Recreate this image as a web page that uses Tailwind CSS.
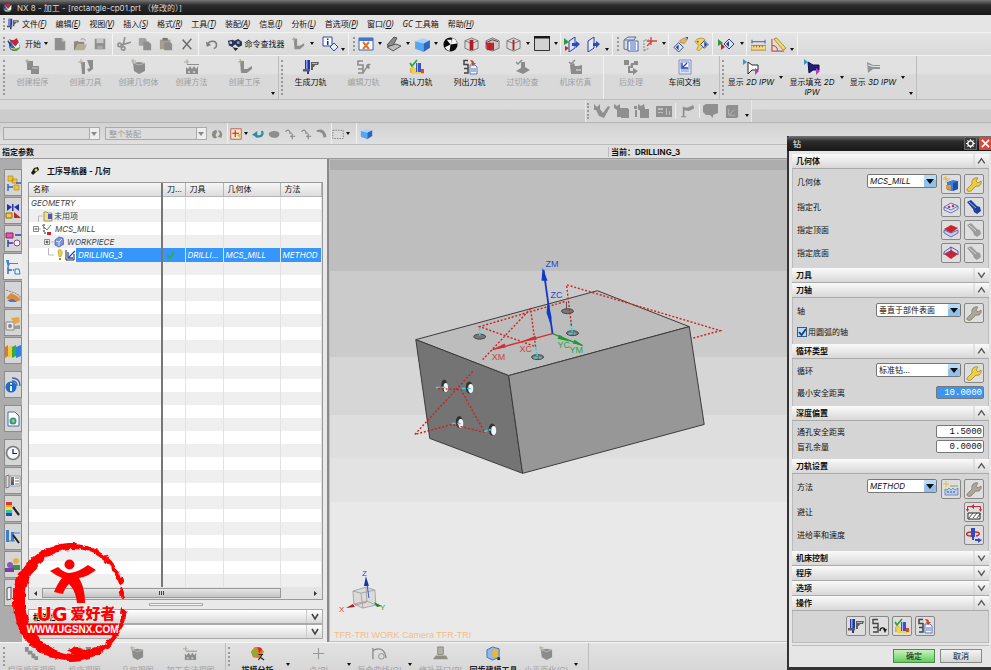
<!DOCTYPE html>
<html lang="zh-CN">
<head>
<meta charset="utf-8">
<title>NX 8 - 加工</title>
<script src="https://cdn.jsdelivr.net/npm/@tailwindcss/browser@4"></script>
</head>
<body class="h-screen overflow-hidden bg-[#d8d8d8] font-['Inter','Noto_Sans_CJK_SC',sans-serif] text-[8px] leading-[10px] text-[#111]">

<!-- Icon library -->
<svg class="hidden" aria-hidden="true">
  <symbol id="ar" viewBox="0 0 8 4"><path d="M2 0h4L4 3z" fill="#111"/></symbol>
  <symbol id="arg" viewBox="0 0 8 4"><path d="M1 0h6L4 4z" fill="#8a8a8a"/></symbol>
  <symbol id="nx" viewBox="0 0 16 16"><circle cx="8" cy="9" r="6" fill="#2d6fc4"/><path d="M3 11c3 5 10 4 11-2-2 3-7 4-11 2z" fill="#e9c63a"/><path d="M4 13c4 3 9 1 10-3-2 2-6 4-10 3z" fill="#37a34a"/><path d="M2 2l5 2 3-3 2 3-2 5-4-1z" fill="#c9262c"/><path d="M4 5l5 5 5-6-1 7-4 1z" fill="#eef4fb"/><path d="M1 4l3 5" stroke="#0d3a7d" stroke-width="1.5"/></symbol>
  <symbol id="gen" viewBox="0 0 16 16"><path d="M2 1h5v9H6v5H4v-5H2z" fill="#2336a8"/><path d="M3 1h1.500v9H3z" fill="#8ea1f2"/><path d="M0 10h7v2.500H0z" fill="#5c5c66"/><path d="M8 3h8l-1 3h-3l-1 2h-1v3H8z" fill="#5f5f5f"/><path d="M9 4h5v1H9z" fill="#b5b5b5"/></symbol>
  <symbol id="new" viewBox="0 0 16 16"><path d="M2 1h8l4 4v10H2z" fill="currentColor"/><path d="M10 1v4h4" fill="#c4c4c4"/></symbol>
  <symbol id="open" viewBox="0 0 16 16"><path d="M1 5l4-1 1 1h6v3H5l-3 6H1z" fill="#8e8b7c"/><path d="M5 8h10l-3 6H2z" fill="#b2ad94"/><path d="M8 3c2-2 5-1 5 1" fill="none" stroke="#8a8a8a"/></symbol>
  <symbol id="save" viewBox="0 0 16 16"><path d="M2 2h12v12H2z" fill="currentColor"/><path d="M4 2h8v5H4z" fill="#c6c6c6"/><path d="M5 10h6v4H5z" fill="#aaa"/></symbol>
  <symbol id="cut" viewBox="0 0 16 16"><g fill="none" stroke="currentColor" stroke-width="1.8"><path d="M9 0L7 10M16 6L5 9"/><circle cx="3" cy="9" r="2"/><circle cx="7" cy="13" r="2"/></g></symbol>
  <symbol id="copy" viewBox="0 0 16 16"><path d="M1 1h7l2 2v7H1z" fill="#a2a2a2"/><path d="M6 5h6l3 3v7H6z" fill="currentColor"/></symbol>
  <symbol id="paste" viewBox="0 0 16 16"><path d="M1 3h12v11H1z" fill="#a39f8c"/><path d="M4 1h6v3H4z" fill="#777"/><path d="M6 6h7l2 2v7H6z" fill="#8d8d8d"/></symbol>
  <symbol id="del" viewBox="0 0 16 16"><path d="M3 3l10 11M13 2L3 14" stroke="#6f6f6f" stroke-width="1.7"/></symbol>
  <symbol id="undo" viewBox="0 0 16 16"><path d="M3 8c3-5 11-4 10 2 0 2-2 3-3 3" fill="none" stroke="#7c7c7c" stroke-width="1.8"/><path d="M1 5l1 6 5-2z" fill="#7c7c7c"/></symbol>
  <symbol id="binoc" viewBox="0 0 16 16"><path d="M1 4l5-1 2 1 4-2 4 3v4l-4 2-3-3-2 1-1 2-4-2z" fill="#2a3556"/><circle cx="4" cy="6" r="1.500" fill="#b9c6e6"/><circle cx="12" cy="6" r="1.500" fill="#8fa2d2"/><path d="M6 11l3 4 3-3z" fill="#222"/></symbol>
  <symbol id="step" viewBox="0 0 16 16"><path d="M3 2h4v8h3l5-3v3l-5 4H4z" fill="currentColor"/><path d="M1 3l5-1M3 0l1 5" stroke="#a9a38c"/></symbol>
  <symbol id="info" viewBox="0 0 16 16"><path d="M1 1h9v9H1z" fill="#fff" stroke="#3346a6"/><path d="M5 2.500h1.500v1.500H5zM5 5h1.500v4H5z" fill="#16309a"/><path d="M12 7l4 4-4 4-4-4z" fill="#e8edf8" stroke="#3a4d87"/></symbol>
  <symbol id="win" viewBox="0 0 16 16"><path d="M1 2h14v12H1z" fill="#fff" stroke="#3463b4"/><path d="M1 2h14v3H1z" fill="#3f74cf"/><path d="M5 6l6 7M11 6l-6 7" stroke="#e0762b" stroke-width="2"/></symbol>
  <symbol id="wire" viewBox="0 0 16 16"><path d="M1 9l7-8 3 1-5 9z" fill="#8b8b8b" stroke="#555"/><path d="M1 11l9-3 5 2-8 5z" fill="#bdbdbd" stroke="#555"/></symbol>
  <symbol id="cube" viewBox="0 0 16 16"><path d="M1 5l7-3 7 2-6 3z" fill="#a8d3fa"/><path d="M1 5l8 2v8l-8-3z" fill="#5aa5f0"/><path d="M9 7l6-3v7l-6 4z" fill="#2a68bd"/></symbol>
  <symbol id="ball" viewBox="0 0 16 16"><circle cx="8" cy="8" r="7.500" fill="#0b0b0b"/><path d="M8 8L10 1a7 7 0 0 1 5 6zM8 8l-1 7a7 7 0 0 1-5-4zM4 3l4 5 2-5z" fill="#f5f5f5"/></symbol>
  <symbol id="rc1" viewBox="0 0 16 16"><path d="M1 4l7-3 7 3v8l-7 3-7-3z" fill="#d9d9d9" stroke="#777"/><path d="M1 4l7 3 7-3" fill="none" stroke="#777"/><path d="M6 3h4v11H6z" fill="#b81820"/></symbol>
  <symbol id="rc2" viewBox="0 0 16 16"><path d="M1 4l7-3 7 3v8l-7 3-7-3z" fill="#cfc6c6" stroke="#777"/><path d="M1 6h8v8H2z" fill="#c4252b"/><path d="M1 6l7-3 6 2M9 6v8M5 6v8" fill="none" stroke="#6e3434"/></symbol>
  <symbol id="rc3" viewBox="0 0 16 16"><path d="M1 4l7-3 7 3v8l-7 3-7-3z" fill="#dcdcdc" stroke="#777"/><path d="M1 4l7 3 7-3" fill="none" stroke="#777"/><path d="M7 3h2v11H7z" fill="#b02329"/></symbol>
  <symbol id="rect" viewBox="0 0 16 16"><path d="M.5 1.500h15v13H.5z" fill="#d2d2d2" stroke="#333"/><path d="M0 0h16v2.500H0z" fill="#181818"/></symbol>
  <symbol id="clip1" viewBox="0 0 16 16"><path d="M5 5l6-4v11l-6 4z" fill="#d6e2f7" stroke="#2c3f9c"/><path d="M0 2l5 4-5 3z" fill="#2f9a3c"/><path d="M1 10l4 2-4 3z" fill="#c9262c"/><path d="M8 7h4V5l4 3-4 4v-2H8z" fill="#2d49ba"/></symbol>
  <symbol id="clip2" viewBox="0 0 16 16"><path d="M3 5l6-4v11l-6 4z" fill="#e4ecfa" stroke="#2c3f9c"/><path d="M8 7h3V5l4 3-4 4v-2H8z" fill="#2d49ba"/></symbol>
  <symbol id="layers" viewBox="0 0 16 16"><path d="M1 4l4-3h8l-2 3zM1 4v9l4 1V5" fill="#d7dbe6" stroke="#66718f"/><path d="M5 5h10v10H5z" fill="#fff" stroke="#3f65b8"/><path d="M7 7h6M7 9h6M7 11h6M7 13h6" stroke="#3f65b8"/></symbol>
  <symbol id="csys" viewBox="0 0 16 16"><path d="M2 15V4h5M2 15l5-3" fill="none" stroke="#888" stroke-dasharray="2 1"/><path d="M9 1v8M5 5h10M10 5l-5 5" stroke="#d0463b" stroke-width="1.300"/></symbol>
  <symbol id="hand" viewBox="0 0 16 16"><path d="M6 6l5 5-5 5-5-5z" fill="#dfe7f7" stroke="#27408c"/><path d="M6 8v6l-3-3z" fill="#27408c"/><path d="M7 4l5-3 3 2-3 4-4-1z" fill="#e5b55a" stroke="#96703a" stroke-width=".6"/><path d="M13 0h3v3z" fill="#3a4fae"/></symbol>
  <symbol id="paint" viewBox="0 0 16 16"><path d="M1 5c2-4 8-5 11-2l-4 4 2 3-5 5-2-2 2-4z" fill="#f1d555" stroke="#8d7a28" stroke-width=".7"/><path d="M11 4l4 4-4 4-4-4z" fill="#dfe7f7" stroke="#27408c"/><path d="M11 5v6l3-3z" fill="#27408c"/><circle cx="4" cy="5" r="1" fill="#d33"/></symbol>
  <symbol id="rg" viewBox="0 0 16 16"><path d="M0 3l5 4-5 3z" fill="#2f9a3c"/><path d="M3 7l4 4-4 3z" fill="#c9262c"/><path d="M11 3l5 5-5 5-5-5z" fill="#dfe7f7" stroke="#27408c"/><path d="M11 5v6l-3-3z" fill="#27408c"/></symbol>
  <symbol id="ruler" viewBox="0 0 16 16"><path d="M0 9h16v5H0z" fill="#f3d88a" stroke="#b0883a"/><path d="M1 3v4M15 3v4M1 5h14" stroke="#3b56b5"/><path d="M3 9v2M6 9v2M9 9v2M12 9v2" stroke="#8a6a28"/></symbol>
  <symbol id="prot" viewBox="0 0 16 16"><path d="M1 2v13h13M1 9c4 0 6 3 6 6" fill="none" stroke="#c25a50" stroke-width="1.300"/><path d="M3 2l3-1 10 11-3 2z" fill="#f1dc62" stroke="#8d7a28" stroke-width=".8"/></symbol>

  <symbol id="cprog" viewBox="0 0 16 16"><path d="M2 2h6v5h6v8H6v-4H2z" fill="currentColor"/><path d="M7 8h6v2H7z" fill="#aaa"/><path d="M0 2l5 0M2 0v5" stroke="#b0ab94"/></symbol>
  <symbol id="ctool" viewBox="0 0 16 16"><path d="M3 3h4v12H4zM9 1h6v9l-4 3-2-3 3-1z" fill="currentColor"/><path d="M0 3h5M3 0v5" stroke="#b0ab94"/></symbol>
  <symbol id="cgeo" viewBox="0 0 16 16"><path d="M2 4l6-1 6 1v8l-6 3-5-3z" fill="currentColor"/><path d="M2 4l6 2 6-2" stroke="#b5b5b5" fill="none"/><path d="M0 2h5M2 0v5" stroke="#b0ab94"/></symbol>
  <symbol id="cmeth" viewBox="0 0 16 16"><path d="M2 8l2 2 2-3 2 3 2-3 2 3 2-3v8H2z" fill="currentColor"/><path d="M3 5h12v1H3z" fill="currentColor"/><path d="M4 12h2v2H4zM9 12h2v2H9z" fill="#c6c6c6"/><path d="M0 3h5M3 0v5" stroke="#b0ab94"/></symbol>
  <symbol id="edit" viewBox="0 0 16 16"><path d="M7 2H2v4h5v4H2M2 14h5v-4" fill="none" stroke="currentColor" stroke-width="1.600"/><path d="M7 13l3-5c0-3 2-4 5-3l-2 2 1 2c-1 1-2 1-3 0l-3 5z" fill="currentColor"/></symbol>
  <symbol id="verify" viewBox="0 0 16 16"><path d="M1 9l4-1v6H1z" fill="#e8a93f"/><path d="M2 9l10 0 3 2v4H3z" fill="#f0cf52"/><path d="M7 4h5v9H7z" fill="#3c55c4"/><path d="M8 4h1v9H8z" fill="#a9b8f4"/><path d="M12 10h3v4h-3z" fill="#d9482f"/><path d="M1 4l2 3 5-6" fill="none" stroke="#2fa53c" stroke-width="1.800"/></symbol>
  <symbol id="list" viewBox="0 0 16 16"><path d="M6 1.500H2v4h4v4H2M2 14h4v-4" fill="none" stroke="#444" stroke-width="1.500"/><path d="M8 6h5l2 2v7H8z" fill="#f3f7fe" stroke="#5a78bd"/><path d="M9 10h5M9 12h5" stroke="#5a78bd"/><path d="M8 1c3 0 4 1 4 3h2l-3 3-2-3h1z" fill="#c8472f"/></symbol>
  <symbol id="gouge" viewBox="0 0 16 16"><path d="M6 3h4v5l5 3-7 4-7-3 5-3z" fill="currentColor"/><path d="M1 3l2 2 4-4" fill="none" stroke="currentColor" stroke-width="1.500"/></symbol>
  <symbol id="mach" viewBox="0 0 16 16"><path d="M2 6l4-2 1 3h3l4-1v9H3z" fill="currentColor"/><path d="M1 3l2 2 4-4" fill="none" stroke="currentColor" stroke-width="1.500"/><path d="M8 10h5v2H8z" fill="#bbb"/></symbol>
  <symbol id="post" viewBox="0 0 16 16"><path d="M1 1h5v5H1zM8 4h3V2h4v4h-5v3H7zM5 7h2v5h3V9l5 3-5 4v-2H5z" fill="currentColor"/></symbol>
  <symbol id="doc" viewBox="0 0 16 16"><path d="M2 1h12v14H2z" fill="#dfe5f6" stroke="#8592c4"/><path d="M4 3h8v7H4z" fill="#fff" stroke="#7f93cf"/><path d="M5 4v5h6M6 8l4-4" fill="none" stroke="#2947b2" stroke-width="1.400"/><path d="M4 12h8" stroke="#8592c4"/></symbol>
  <symbol id="ipw2" viewBox="0 0 16 16"><path d="M5 3l4 3h6v5H9l-4 4z" fill="#fff" stroke="#222"/><path d="M0 0l4 3-4 3z" fill="#2a9ccc"/><path d="M12 9l4 3-4 4z" fill="#b93bb7"/></symbol>
  <symbol id="ipwf" viewBox="0 0 16 16"><path d="M4 3l5 3h6v5H9l-4 3z" fill="#1d1d84" stroke="#101040"/><path d="M0 0l4 3-4 3z" fill="#2a9ccc"/><path d="M12 9l4 3-4 4z" fill="#b93bb7"/></symbol>
  <symbol id="ipw3" viewBox="0 0 16 16"><path d="M2 3l6 3h7v4H8l-5 4z" fill="#8d9499"/><path d="M3 6l5 1.500h7" stroke="#dfe5e8" fill="none" stroke-width="1.200"/></symbol>

  <symbol id="g1" viewBox="0 0 16 16"><path d="M0 1l3 3 3-3v5l3 4 5-7 2 1-6 11L5 13 2 7H0z" fill="currentColor"/></symbol>
  <symbol id="g2" viewBox="0 0 16 16"><path d="M0 1l3 2 3-2v4h8v9H3V7L0 5zM7 6h8v9H7z" fill="currentColor"/></symbol>
  <symbol id="g3" viewBox="0 0 16 16"><path d="M0 3h3v3H0zM1 7h2v7H1zM4 1l3 2 3-2 1 5h4v9H6V7H4z" fill="currentColor"/></symbol>
  <symbol id="g4" viewBox="0 0 16 16"><path d="M0 3h16v11H0z" fill="currentColor"/><path d="M2 5h5v2H2zM2 9h5v1H2zM10 5h1v7h-1zM13 8h1v4h-1z" fill="#bdbdbd"/></symbol>
  <symbol id="g5" viewBox="0 0 16 16"><path d="M2 3h2v12H2zM4 4h4l6-3 1 4-6 3-5-1zM0 14h6v1H0z" fill="currentColor"/></symbol>
  <symbol id="g6" viewBox="0 0 16 16"><path d="M0 3l3-2h12v9l-5 2v3l-3-3H3l-3-3z" fill="currentColor"/></symbol>
  <symbol id="g7" viewBox="0 0 16 16"><path d="M1 2l2-1h11v13l-2 1H1z" fill="currentColor"/><path d="M4 5v7h7M5 11l5-5" fill="none" stroke="#b5b5b5"/></symbol>
  <symbol id="link" viewBox="0 0 16 16"><path d="M2 5l5-3 1 4-2 3 2 4-4 1-3-4zM9 3l4 1 2 4-1 5-5-1 3-4z" fill="#8b8b85"/></symbol>
  <symbol id="snap" viewBox="0 0 16 16"><path d="M1 1h14v14H1z" fill="#f7e6c8" stroke="#b53a33"/><path d="M7 3v9M3 7h9" stroke="#c02727" stroke-width="1.500"/><path d="M9 9l4 4 1-5z" fill="#e2b92b"/></symbol>
  <symbol id="back" viewBox="0 0 16 16"><path d="M13 4c2 3 1 7-3 7H5" fill="none" stroke="#2b8d9d" stroke-width="3"/><path d="M0 9l7-5v9z" fill="#2b8d9d"/></symbol>
  <symbol id="blob" viewBox="0 0 16 16"><path d="M1 8c0-4 12-6 14-1 1 4-3 7-7 6-3 0-7-2-7-5z" fill="#8e8e8e"/></symbol>
  <symbol id="pt" viewBox="0 0 16 16"><path d="M2 5c3-4 6-2 6 2M7 7h4M8 11h7M11 8v7" fill="none" stroke="#888" stroke-width="1.600"/></symbol>
  <symbol id="pt2" viewBox="0 0 16 16"><path d="M1 3c6-3 12 0 13 9l-4 1c0-6-4-8-9-8z" fill="#8c8c8c"/></symbol>
  <symbol id="dash" viewBox="0 0 16 16"><path d="M1 3h14v11H1z" fill="none" stroke="#666" stroke-dasharray="2 1.500"/></symbol>

  <symbol id="s1" viewBox="0 0 16 16"><path d="M3 1h5v5H3zM7 4h5v4H7zM9 10h5v5H9z" fill="#f0c531" stroke="#a8801c" stroke-width=".6"/><path d="M3 9v7M3 12h5M11 8h5" stroke="#2b62c0" stroke-width="1.400"/></symbol>
  <symbol id="s2" viewBox="0 0 16 16"><path d="M2 1l5 3-5 4zM14 1L9 4l5 4z" fill="#2230b0"/><path d="M7 1h1.500v7H7z" fill="#2230b0"/><path d="M1 10h6v5H1z" fill="#f2cc3a" stroke="#8a6a12"/><path d="M9 9l7 6H9z" fill="#c2252a"/></symbol>
  <symbol id="s3" viewBox="0 0 16 16"><path d="M1 2h7v5H1z" fill="#d85cab" stroke="#8d2068"/><path d="M3 9v7M3 12h5M10 4h6" stroke="#2b3fa0" stroke-width="1.400"/><circle cx="12" cy="12" r="3" fill="#fff" stroke="#a13582"/></symbol>
  <symbol id="s4" viewBox="0 0 16 16"><path d="M1 1h3v3h9v1H5l-2 4z" fill="#3f86d4"/><path d="M3 8v7M3 11h4M8 11h1" stroke="#2b62c0" stroke-width="1.400"/><path d="M10 10l4 0 1 5h-5z" fill="#eaf3fd" stroke="#2f78c5"/></symbol>
  <symbol id="s5" viewBox="0 0 16 16"><path d="M1 3l9 3 5 3v3" fill="none" stroke="#8a78b8" stroke-dasharray="2 1"/><path d="M1 11l5-5 6 3 4 4-6 2z" fill="#e08a35"/><path d="M2 13l6-1 4 3H5z" fill="#3f79cb"/></symbol>
  <symbol id="s6" viewBox="0 0 16 16"><path d="M1 7h8v8H1z" fill="#e7e7e7" stroke="#888"/><path d="M6 3l8-1 1 5-5 2z" fill="#eba643"/><path d="M9 11l6-1v4H9z" fill="#9a9a9a"/><circle cx="5" cy="11" r="2" fill="#888"/></symbol>
  <symbol id="s7" viewBox="0 0 16 16"><path d="M0 4l3-2v11l-3 2z" fill="#e2762c"/><path d="M3 4l4-2v11l-4 2z" fill="#f0cd2e"/><path d="M7 4l4-2v11l-4 2z" fill="#35a94a"/><path d="M11 4l5-2v11l-5 2z" fill="#2c83dc"/></symbol>
  <symbol id="s8" viewBox="0 0 16 16"><circle cx="6" cy="10" r="5.500" fill="#1c6cc9"/><path d="M5 6h2v1.500H5zM5 9h2v5H5z" fill="#fff"/><path d="M7 4c3 0 5 2 5 5M7 1c5 0 8 3 8 8" fill="none" stroke="#3f5db5" stroke-width="1.300"/></symbol>
  <symbol id="s9" viewBox="0 0 16 16"><path d="M3 1h7l4 4v10H3z" fill="#fff" stroke="#3c6fb8"/><circle cx="8" cy="10" r="3.500" fill="#3b8f83"/><path d="M6 9l3-1 1 3-2 1z" fill="#8fd06a"/></symbol>
  <symbol id="s10" viewBox="0 0 16 16"><circle cx="8" cy="8" r="6.500" fill="#f3f6fa" stroke="#7a7a7a" stroke-width="1.600"/><path d="M8 4v4.500h4" fill="none" stroke="#222" stroke-width="1.200"/></symbol>
  <symbol id="s11" viewBox="0 0 16 16"><path d="M1 3l3-1v12l-3 1z" fill="#ddd" stroke="#777"/><path d="M5 3h10v10H5z" fill="#fff" stroke="#999"/><path d="M6 4h3v3H6z" fill="#38a05d"/><path d="M6 7h3v2H6z" fill="#d2432d"/><path d="M6 9h3v3H6z" fill="#2b62c0"/><path d="M10 5h4M10 8h4M10 11h4" stroke="#777"/></symbol>
  <symbol id="s12" viewBox="0 0 16 16"><path d="M1 1h6v3H1z" fill="#e53323"/><path d="M1 4h6v2H1z" fill="#f0a42a"/><path d="M1 6h6v3H1z" fill="#f0e82c"/><path d="M1 9h6v3H1z" fill="#35c3a0"/><path d="M1 12h6v3H1z" fill="#2645d2"/><path d="M8 6l6 8" stroke="#222" stroke-width="2.200"/></symbol>
  <symbol id="s13" viewBox="0 0 16 16"><path d="M1 1h3v12H1zM6 3h3v9H6z" fill="#3a80cc"/><path d="M1 12h9M9 4h6" stroke="#3a80cc"/><path d="M8 6l6 8" stroke="#222" stroke-width="2"/></symbol>
  <symbol id="s14" viewBox="0 0 16 16"><circle cx="11" cy="4" r="3" fill="#e3b24a"/><path d="M6 8h9v5H6z" fill="#3d9146"/><circle cx="5" cy="8" r="3" fill="#8b5ab8"/><path d="M0 11h9v4H0z" fill="#7242a5"/></symbol>
  <symbol id="s15" viewBox="0 0 16 16"><path d="M2 3l4-1v12l-4 1z" fill="#eee" stroke="#555"/><path d="M8 3h6v11H8z" fill="#c33"/></symbol>

  <symbol id="geon" viewBox="0 0 16 16"><path d="M4 6l6-2 5 1v8l-6 2-5-1z" fill="#3c7be0"/><path d="M10 7l5-2v8l-5 2z" fill="#1d4fae"/><path d="M3 9h5v5l-5-1z" fill="#da9a3a"/><path d="M0 3h7M3 0v7M1 1l5 5" stroke="#e6b52c"/></symbol>
  <symbol id="wr" viewBox="0 0 16 16"><path d="M1 13l5-5c-1-4 2-7 6-6l-2 3 2 2 3-2c1 4-2 6-5 5l-5 5c-2 1-5 0-4-2z" fill="currentColor" stroke="#7c6a2c" stroke-width=".6"/></symbol>
  <symbol id="hole" viewBox="0 0 16 16"><path d="M1 8l7-4 7 3v3l-7 4-7-3z" fill="#dfe1f4" stroke="#4a58b6" stroke-width=".8"/><path d="M1 8l7 3 7-4" fill="none" stroke="#4a58b6" stroke-width=".8"/><circle cx="6" cy="8" r="1.300" fill="#c8353a"/><circle cx="10" cy="7" r="1.300" fill="#c8353a"/></symbol>
  <symbol id="torch" viewBox="0 0 16 16"><path d="M1 3l4-2 6 6 3 1 1 4-4 3-3-2-1-3z" fill="currentColor"/><path d="M3 3l7 6" stroke="#ffffff" stroke-opacity=".6"/></symbol>
  <symbol id="topf" viewBox="0 0 16 16"><path d="M1 8l7 3 7-3v3l-7 4-7-4z" fill="#c5cbe9" stroke="#4a58b6" stroke-width=".8"/><path d="M1 7l7-4 7 3-7 5z" fill="#cb2530"/></symbol>
  <symbol id="botf" viewBox="0 0 16 16"><path d="M1 9l7-4 7 4-7 5z" fill="#cb2530"/><path d="M1 7l7-5 7 4v4M1 7v3M8 2v8" fill="none" stroke="#3d4ab0" stroke-width=".9"/></symbol>
  <symbol id="metn" viewBox="0 0 16 16"><path d="M2 8l2 1 2-2 2 2 2-2 2 2 3-2v7H2z" fill="#b8d0ee" stroke="#5577aa" stroke-width=".7"/><path d="M4 11h8" stroke="#35568c" stroke-dasharray="2 1"/><path d="M0 3h6M3 0v6" stroke="#e6c52c"/><path d="M7 5h8" stroke="#7ba36c"/></symbol>
  <symbol id="avoid" viewBox="0 0 16 16"><path d="M2 9h12v6H2z" fill="#fff" stroke="#222"/><path d="M3 14l4-5M7 14l4-5M11 14l3-4" stroke="#222" stroke-width=".8"/><path d="M1.500 6V2.500h13V6" fill="none" stroke="#cb2530"/><path d="M8 0v5L5 2.500zM0 5h3L1.500 8zM13 5h3l-1.500 3z" fill="#cb2530"/></symbol>
  <symbol id="feed" viewBox="0 0 16 16"><path d="M5 1h4v9H8v3H6v-3H5z" fill="#3447c4"/><path d="M6 5c-7 0-7 4-1 4M9 5c6 0 5 3 1 4" fill="none" stroke="#cb2530" stroke-width="1.400"/><path d="M9 12h3v-1l4 2-4 3v-2H9z" fill="#3447c4"/></symbol>
  <symbol id="replay" viewBox="0 0 16 16"><path d="M7 1.500H2v4h5v4H2M2 14h5V9" fill="none" stroke="#444" stroke-width="1.400"/><path d="M9 13c0-4 5-4 5-1" fill="none" stroke="#222" stroke-width="1.400"/><path d="M12 11h4l-2 4z" fill="#222"/></symbol>
  <symbol id="v1" viewBox="0 0 16 16"><path d="M1 1h4v4h4v3h3v5H8V9H4V6H1zM11 11h4v4h-4z" fill="currentColor"/></symbol>
  <symbol id="draft" viewBox="0 0 16 16"><path d="M1 6l4-5 6 0 4 5-5 7-7-1z" fill="#df7f2b"/><path d="M1 7l4-4 3 3-2 6z" fill="#7fb62f"/><path d="M8 1l5 2-3 5z" fill="#d22b24"/><path d="M9 9h5M9 15l4-6M11 12l4 3" stroke="#222" stroke-width="1.200"/></symbol>
  <symbol id="curve" viewBox="0 0 16 16"><path d="M1 2v12M1 5c6-4 13-2 14 8" fill="none" stroke="#8a8a8a" stroke-width="1.400"/><circle cx="10" cy="11" r="3" fill="none" stroke="#8a8a8a"/></symbol>
  <symbol id="patch" viewBox="0 0 16 16"><path d="M5 1h6v8H5z" fill="#b2b0a6" stroke="#8b8a80"/><path d="M3 10h11l2 4H0z" fill="#8f8e84"/></symbol>
  <symbol id="sync" viewBox="0 0 16 16"><path d="M1 4l6-3 7 2v9l-7 3-6-3z" fill="#8fb7e8" stroke="#4473b4"/><path d="M7 3l6 1v8H7z" fill="#f3b52e"/><path d="M12 12h3v3h-3z" fill="#333"/></symbol>
</svg>

<div class="flex h-full flex-col">
  <!-- Title bar -->
  <header class="flex h-[15px] shrink-0 items-center gap-1 bg-linear-to-b from-[#777] via-[#2c2c2c] via-35% to-[#181818] pl-[2px] text-[#d8d8d8]">
    <svg class="size-[11px]"><use href="#nx"/></svg>
    <h1>NX 8 - 加工 - [rectangle-cp01.prt （修改的）]</h1>
  </header>

  <!-- Menu bar -->
  <nav class="flex h-[17px] shrink-0 items-center gap-[9px] bg-[#e5e5e5] pl-[3px] font-['Noto_Sans','Noto_Sans_CJK_SC',sans-serif] whitespace-nowrap">
    <span class="-mr-[6px] flex items-center gap-[2px]"><i class="h-3 border-l-2 border-dotted border-[#999]"></i><svg class="size-3"><use href="#gen"/></svg></span>
    <a href="#">文件<i>(<u>F</u>)</i></a><a href="#">编辑<i>(<u>E</u>)</i></a><a href="#">视图<i>(<u>V</u>)</i></a><a href="#">插入<i>(<u>S</u>)</i></a><a href="#">格式<i>(<u>R</u>)</i></a><a href="#">工具<i>(<u>T</u>)</i></a><a href="#">装配<i>(<u>A</u>)</i></a><a href="#">信息<i>(<u>I</u>)</i></a><a href="#">分析<i>(<u>L</u>)</i></a><a href="#">首选项<i>(<u>P</u>)</i></a><a href="#">窗口<i>(<u>O</u>)</i></a><a href="#"><i>GC</i> 工具箱</a><a href="#">帮助<i>(<u>H</u>)</i></a>
  </nav>

  <!-- Standard toolbar -->
  <div class="flex h-[23px] shrink-0 items-stretch border-t border-[#f2f2f2] bg-linear-to-b from-[#e4e4e4] to-[#d9d9d9] pl-[3px] text-[#8f8f8f] whitespace-nowrap [&_button]:flex [&_button]:items-center [&_button]:justify-center [&>div]:flex [&>div]:border-r [&>div]:border-[#f4f4f4]">
    <div class="w-[110px]">
      <i class="my-1 w-1 border-l-2 border-dotted border-[#999]"></i>
      <button class="w-[43px] gap-[3px] text-[#111]"><svg class="size-[15px]"><use href="#nx"/></svg>开始<svg class="-ml-[2px] h-1 w-2"><use href="#ar"/></svg></button>
      <button class="w-5" aria-label="新建"><svg class="size-[14px]"><use href="#new"/></svg></button>
      <button class="w-5" aria-label="打开"><svg class="size-[15px]"><use href="#open"/></svg></button>
      <button class="w-5" aria-label="保存"><svg class="size-[14px]"><use href="#save"/></svg></button>
    </div>
    <div class="w-[86px]">
      <button class="w-[21px]" aria-label="剪切"><svg class="size-[14px]"><use href="#cut"/></svg></button>
      <button class="w-[21px]" aria-label="复制"><svg class="size-[14px]"><use href="#copy"/></svg></button>
      <button class="w-[21px]" aria-label="粘贴"><svg class="size-[14px]"><use href="#paste"/></svg></button>
      <button class="w-[21px]" aria-label="删除"><svg class="size-[14px]"><use href="#del"/></svg></button>
    </div>
    <div class="w-[150px]">
      <button class="w-[25px]" aria-label="撤消"><svg class="size-[14px]"><use href="#undo"/></svg></button>
      <button class="w-[63px] gap-[3px] text-[#111]"><svg class="size-[15px]"><use href="#binoc"/></svg>命令查找器</button>
      <button class="w-[21px]" aria-label="工序"><svg class="size-[14px]"><use href="#step"/></svg></button>
      <button class="w-2" aria-label="更多"><svg class="h-1 w-2"><use href="#ar"/></svg></button>
      <button class="ml-1 w-[19px]" aria-label="信息"><svg class="size-4"><use href="#info"/></svg></button>
      <button class="w-2 pt-3" aria-label="选项"><svg class="h-1 w-2"><use href="#ar"/></svg></button>
    </div>
    <div class="w-[212px]">
      <i class="my-1 ml-1 w-[3px] border-l-2 border-dotted border-[#999]"></i>
      <button class="w-5" aria-label="适合窗口"><svg class="size-4"><use href="#win"/></svg></button>
      <button class="w-2" aria-label="更多"><svg class="h-1 w-2"><use href="#ar"/></svg></button>
      <button class="w-5" aria-label="透视"><svg class="size-4"><use href="#wire"/></svg></button>
      <button class="w-2" aria-label="更多"><svg class="h-1 w-2"><use href="#ar"/></svg></button>
      <button class="w-5" aria-label="着色"><svg class="size-[17px]"><use href="#cube"/></svg></button>
      <button class="w-2" aria-label="更多"><svg class="h-1 w-2"><use href="#ar"/></svg></button>
      <button class="w-[21px]" aria-label="渲染"><svg class="size-[15px]"><use href="#ball"/></svg></button>
      <button class="w-[21px]" aria-label="截面"><svg class="size-[15px]"><use href="#rc1"/></svg></button>
      <button class="w-[21px]" aria-label="编辑截面"><svg class="size-[15px]"><use href="#rc2"/></svg></button>
      <button class="w-[21px]" aria-label="新建截面"><svg class="size-[15px]"><use href="#rc3"/></svg></button>
      <button class="w-2" aria-label="更多"><svg class="h-1 w-2"><use href="#ar"/></svg></button>
      <button class="w-5" aria-label="背景"><svg class="size-4"><use href="#rect"/></svg></button>
      <button class="w-2" aria-label="更多"><svg class="h-1 w-2"><use href="#ar"/></svg></button>
    </div>
    <div class="w-[52px]">
      <button class="w-[21px]" aria-label="剪切截面"><svg class="size-4"><use href="#clip1"/></svg></button>
      <button class="w-[21px]" aria-label="显示截面"><svg class="size-4"><use href="#clip2"/></svg></button>
      <button class="w-2 pt-3" aria-label="选项"><svg class="h-1 w-2"><use href="#ar"/></svg></button>
    </div>
    <div class="w-[56px]">
      <i class="my-1 ml-1 w-1 border-l-2 border-dotted border-[#999]"></i>
      <button class="w-5" aria-label="图层"><svg class="size-4"><use href="#layers"/></svg></button>
      <button class="w-5" aria-label="坐标系"><svg class="size-4"><use href="#csys"/></svg></button>
      <button class="w-2" aria-label="更多"><svg class="h-1 w-2"><use href="#ar"/></svg></button>
    </div>
    <div class="w-[44px] pl-px">
      <button class="w-[21px]" aria-label="隐藏"><svg class="size-[15px]"><use href="#hand"/></svg></button>
      <button class="w-[21px]" aria-label="编辑显示"><svg class="size-[15px]"><use href="#paint"/></svg></button>
    </div>
    <div class="w-[34px]">
      <button class="w-[25px]" aria-label="显示和隐藏"><svg class="size-4"><use href="#rg"/></svg></button>
      <button class="w-2" aria-label="更多"><svg class="h-1 w-2"><use href="#ar"/></svg></button>
    </div>
    <div class="w-[51px]">
      <button class="ml-px w-5" aria-label="测量距离"><svg class="size-[15px]"><use href="#ruler"/></svg></button>
      <button class="w-5" aria-label="测量角度"><svg class="size-[15px]"><use href="#prot"/></svg></button>
      <button class="w-2 pt-3" aria-label="选项"><svg class="h-1 w-2"><use href="#ar"/></svg></button>
    </div>
  </div>

  <!-- Manufacturing toolbar -->
  <div class="flex h-[45px] shrink-0 border-y border-t-[#f2f2f2] border-b-[#bdbdbd] bg-linear-to-b from-[#e1e1e1] from-40% to-[#d9d9d9] to-45% pl-[3px] text-[#a0a0a0] whitespace-nowrap [&_button]:flex [&_button]:shrink-0 [&_button]:flex-col [&_button]:items-center [&_button]:gap-[2px] [&_button]:pt-[3px] [&_svg]:text-[#8c8c8c] [&>div]:flex [&>div]:border-r [&>div]:border-[#bdbdbd]">
    <div class="w-[276px]">
      <i class="my-1 w-[3px] border-l-2 border-dotted border-[#999]"></i>
      <button class="w-[53px]"><svg class="size-4"><use href="#cprog"/></svg>创建程序</button>
      <button class="w-[53px]"><svg class="size-4"><use href="#ctool"/></svg>创建刀具</button>
      <button class="w-[53px]"><svg class="size-4"><use href="#cgeo"/></svg>创建几何体</button>
      <button class="w-[53px]"><svg class="size-4"><use href="#cmeth"/></svg>创建方法</button>
      <button class="w-[53px]"><svg class="size-4"><use href="#step"/></svg>创建工序</button>
      <svg class="mt-9 -ml-[2px] h-1 w-2"><use href="#ar"/></svg>
    </div>
    <div class="w-[441px]">
      <i class="my-1 ml-[2px] w-[3px] border-l-2 border-dotted border-[#999]"></i>
      <button class="w-[53px] text-[#111]"><svg class="size-4"><use href="#gen"/></svg>生成刀轨</button>
      <button class="w-[53px]"><svg class="size-4"><use href="#edit"/></svg>编辑刀轨</button>
      <button class="w-[53px] text-[#111]"><svg class="size-4"><use href="#verify"/></svg>确认刀轨</button>
      <button class="w-[53px] text-[#111]"><svg class="size-4"><use href="#list"/></svg>列出刀轨</button>
      <button class="w-[53px]"><svg class="size-4"><use href="#gouge"/></svg>过切检查</button>
      <button class="w-[53px]"><svg class="size-4"><use href="#mach"/></svg>机床仿真</button>
      <button class="ml-px w-[55px] border-l border-[#f2f2f2]"><svg class="size-4"><use href="#post"/></svg>后处理</button>
      <button class="w-[53px] text-[#111]"><svg class="size-4"><use href="#doc"/></svg>车间文档</button>
      <svg class="mt-9 h-1 w-2"><use href="#ar"/></svg>
    </div>
    <div class="w-[197px] text-[#111]">
      <i class="my-1 ml-[2px] w-[3px] border-l-2 border-dotted border-[#999]"></i>
      <button class="w-[52px]"><svg class="size-4"><use href="#ipw2"/></svg><span>显示 <i>2D IPW</i></span></button>
      <svg class="mt-5 h-1 w-2"><use href="#ar"/></svg>
      <button class="ml-px w-[52px]"><svg class="size-4"><use href="#ipwf"/></svg><span>显示填充 <i>2D</i></span><i class="-mt-[2px]">IPW</i></button>
      <svg class="mt-5 h-1 w-2"><use href="#ar"/></svg>
      <button class="ml-px w-[52px]"><svg class="size-4"><use href="#ipw3"/></svg><span>显示 <i>3D IPW</i></span></button>
      <svg class="mt-5 h-1 w-2"><use href="#ar"/></svg>
      <svg class="mt-9 h-1 w-2"><use href="#ar"/></svg>
    </div>
  </div>

  <!-- Workpiece toolbar -->
  <div class="flex h-[23px] shrink-0 border-b border-[#b4b4b4] bg-linear-to-b from-[#dadada] from-40% to-[#cccccc] to-45%">
    <div class="ml-[585px] flex items-center border-r border-l border-[#e8e8e8] bg-[#d6d6d6] text-[#8f8f8f]">
      <i class="ml-px h-4 w-1 border-l-2 border-dotted border-[#999]"></i>
      <button class="flex w-[21px] justify-center" aria-label="检查"><svg class="size-4"><use href="#g1"/></svg></button>
      <button class="flex w-5 justify-center" aria-label="部件"><svg class="size-4"><use href="#g2"/></svg></button>
      <button class="flex w-5 justify-center" aria-label="树"><svg class="size-4"><use href="#g3"/></svg></button>
      <button class="flex w-6 justify-center border-r border-[#eee]" aria-label="面板"><svg class="size-4"><use href="#g4"/></svg></button>
      <button class="flex w-6 justify-center border-r border-[#eee]" aria-label="标记"><svg class="size-[14px]"><use href="#g5"/></svg></button>
      <button class="flex w-[22px] justify-center" aria-label="注释"><svg class="size-4"><use href="#g6"/></svg></button>
      <button class="flex w-[21px] justify-center" aria-label="文档"><svg class="size-[15px]"><use href="#g7"/></svg></button>
      <svg class="mb-1 h-1 w-2 self-end"><use href="#ar"/></svg>
    </div>
  </div>

  <!-- Selection bar -->
  <div class="flex h-[21px] shrink-0 items-center bg-linear-to-b from-[#d2d2d2] to-[#e0e0e0] pl-[3px] text-[#9a9a9a]">
    <div class="relative h-[13px] w-[97px] border border-[#aaa] bg-[#dcdcdc]">
      <select aria-label="类型过滤器" class="block size-full appearance-none pl-1"><option></option></select>
      <span class="pointer-events-none absolute inset-y-0 right-0 flex w-[10px] items-center border-l border-[#aaa] bg-[#eee]"><svg class="h-1 w-2"><use href="#arg"/></svg></span>
    </div>
    <div class="relative ml-[5px] h-[13px] w-[102px] border border-[#aaa] bg-[#dcdcdc]">
      <select aria-label="选择范围" class="block size-full appearance-none pl-[3px]"><option>整个装配</option></select>
      <span class="pointer-events-none absolute inset-y-0 right-0 flex w-[10px] items-center border-l border-[#aaa] bg-[#eee]"><svg class="h-1 w-2"><use href="#arg"/></svg></span>
    </div>
    <svg class="mr-1 ml-1 size-3"><use href="#link"/></svg>
    <div class="flex h-full items-center gap-1 border-x border-[#f0f0f0] pr-[3px] pl-[2px]">
      <svg class="size-3"><use href="#snap"/></svg><svg class="-ml-1 h-1 w-2"><use href="#ar"/></svg>
      <svg class="-ml-[2px] size-3"><use href="#back"/></svg><svg class="size-3"><use href="#blob"/></svg><svg class="size-3"><use href="#pt"/></svg><svg class="size-3"><use href="#pt"/></svg><svg class="size-3"><use href="#pt2"/></svg>
    </div>
    <svg class="size-3"><use href="#dash"/></svg><svg class="mr-1 h-1 w-2"><use href="#ar"/></svg>
    <div class="flex h-full items-center border-l border-[#f0f0f0] pl-[3px]"><svg class="size-[13px]"><use href="#cube"/></svg></div>
  </div>

  <!-- Cue line -->
  <div class="flex h-[14px] shrink-0 items-center border-t border-[#bbb] bg-[#dfdfdf] font-bold">
    <span class="w-[608px] pl-[2px]">指定参数</span>
    <span class="border-l border-[#bbb] pl-[2px]">当前：DRILLING_3</span>
  </div>

  <!-- Main area -->
  <div class="flex min-h-0 flex-1 border-t border-[#999]">
    <!-- Resource bar -->
    <aside class="flex w-[22px] shrink-0 flex-col items-end gap-[7px] bg-[#acacac] pt-[10px] [&_button]:flex [&_button]:h-[27px] [&_button]:w-[18px] [&_button]:items-center [&_button]:justify-center [&_button]:border [&_button]:border-[#8c8c8c] [&_button]:bg-[#d6d6d6] [&>div]:flex [&>div]:flex-col [&>div]:gap-px">
      <div>
        <button aria-label="装配导航器"><svg class="size-4"><use href="#s1"/></svg></button>
        <button aria-label="约束导航器"><svg class="size-4"><use href="#s2"/></svg></button>
        <button aria-label="部件导航器"><svg class="size-4"><use href="#s3"/></svg></button>
        <button aria-label="工序导航器" class="-ml-px w-[19px]! border-r-0! bg-[#ececec]!"><svg class="size-4"><use href="#s4"/></svg></button>
        <button aria-label="机床导航器"><svg class="size-4"><use href="#s5"/></svg></button>
        <button aria-label="加工特征导航器"><svg class="size-4"><use href="#s6"/></svg></button>
        <button aria-label="重用库"><svg class="size-4"><use href="#s7"/></svg></button>
      </div>
      <div><button aria-label="HD3D 工具"><svg class="size-4"><use href="#s8"/></svg></button></div>
      <div><button aria-label="浏览器"><svg class="size-4"><use href="#s9"/></svg></button></div>
      <div>
        <button aria-label="历史记录"><svg class="size-4"><use href="#s10"/></svg></button>
        <button aria-label="系统材料"><svg class="size-4"><use href="#s11"/></svg></button>
        <button aria-label="可视化"><svg class="size-4"><use href="#s12"/></svg></button>
        <button aria-label="加工向导"><svg class="size-4"><use href="#s13"/></svg></button>
        <button aria-label="角色"><svg class="size-4"><use href="#s14"/></svg></button>
        <button aria-label="系统场景"><svg class="size-4"><use href="#s15"/></svg></button>
      </div>
    </aside>

    <!-- Operation navigator -->
    <section class="flex w-[307px] shrink-0 flex-col border-r-2 border-[#8a8a8a] bg-[#e9e9e9] pr-1 pb-[3px] pl-[6px]">
      <h2 class="flex h-[23px] shrink-0 items-center gap-2 pl-[3px] font-bold"><svg class="size-2" viewBox="0 0 8 8"><path d="M0 6l3-5 4-1 1 3-4 3-2 2z" fill="#1b1b1b"/><circle cx="5" cy="3" r="1.500" fill="#e2dc6a"/></svg>工序导航器 - 几何</h2>
      <div class="flex min-h-0 flex-1 flex-col border border-[#999] bg-white">
        <table class="min-h-0 w-full flex-1 table-fixed border-collapse text-left whitespace-nowrap [&_td]:h-[13px] [&_td]:overflow-hidden [&_td]:border-r [&_td]:border-[#e2e2e2] [&_td]:p-0 [&_td]:pl-[2px] [&_th]:h-[13px] [&_th]:overflow-hidden [&_th]:border-r [&_th]:border-b [&_th]:border-[#b5b5b5] [&_th]:p-0 [&_th]:pl-1 [&_th]:font-normal [&_tr>*:first-child]:border-r-2 [&_tr>*:first-child]:border-r-[#777] [&_tbody_tr:nth-child(even)]:bg-[#efefef]">
          <colgroup><col class="w-[133px]"><col class="w-[23px]"><col class="w-[38px]"><col class="w-[57px]"><col></colgroup>
          <thead class="bg-linear-to-b from-[#f6f6f6] to-[#dcdcdc]"><tr><th>名称</th><th>刀...</th><th>刀具</th><th>几何体</th><th>方法</th></tr></thead>
          <tbody id="rows" class="text-[#444]">
            <tr><td><i>GEOMETRY</i></td><td></td><td></td><td></td><td></td></tr>
            <tr><td><span class="flex items-center gap-px pl-1"><svg class="-my-1 h-[14px] w-[18px]" viewBox="0 0 18 14"><path d="M3.500 14V7H8" fill="none" stroke="#bbb"/><path d="M9 3h3l1 1h4v8H9z" fill="#f3e08a" stroke="#92803a" stroke-width=".8"/><path d="M13 5h4v5h-4z" fill="#4f57b8"/></svg>未用项</span></td><td></td><td></td><td></td><td></td></tr>
            <tr><td><span class="flex items-center gap-[3px] pl-px"><svg class="-my-1 h-[14px] w-5" viewBox="0 0 20 14"><path d="M1.500 4.500h5v5h-5z" fill="#fff" stroke="#888"/><path d="M2.500 7h3" stroke="#333"/><path d="M7 7h2" stroke="#bbb"/><path d="M12 2v9h7" fill="none" stroke="#222" stroke-dasharray="2 1"/><path d="M10 3l5 5 4-5" fill="none" stroke="#3aa149"/><path d="M15 10h4v3h-4z" fill="#c23"/></svg><i>MCS_MILL</i></span></td><td></td><td></td><td></td><td></td></tr>
            <tr><td><span class="flex items-center gap-[3px] pl-[13px]"><svg class="-my-1 h-[14px] w-5" viewBox="0 0 20 14"><path d="M.5 4.500h5v5h-5z" fill="#fff" stroke="#888"/><path d="M1.500 7h3M3 5.500v3" stroke="#333"/><path d="M7 7h3" stroke="#bbb"/><path d="M11 5l4-3 4 1 1 6-5 3-4-2z" fill="#7d93da" stroke="#3f58b5" stroke-width=".7"/><path d="M12 6l3 1 3-3M15 7v4" stroke="#e4eafb" fill="none"/></svg><i>WORKPIECE</i></span></td><td></td><td></td><td></td><td></td></tr>
            <tr class="text-white"><td class="pl-0!"><span class="flex items-center"><svg class="-my-1 h-[14px] w-[47px] shrink-0" viewBox="0 0 47 14"><path d="M19.500 0v7H25" fill="none" stroke="#bbb"/><path d="M29 2.500c2-2 5 0 4 3l-1 3h-2z" fill="#f0d335" stroke="#a18a1c" stroke-width=".6"/><path d="M30 10h2v2h-2z" fill="#a18a1c"/><path d="M37 2v10h8V6" fill="none" stroke="#222"/><path d="M39 4v6h5M40 9l6-6" fill="none" stroke="#2947b2" stroke-width="1.300"/></svg><i class="flex-1 bg-[#3596fb] py-[2px] pl-[2px] leading-[10px]">DRILLING_3</i></span></td><td class="bg-[#3596fb]"><svg class="size-[10px]" viewBox="0 0 10 10"><path d="M2 5l3 3 4-6" fill="none" stroke="#2bb04a" stroke-width="2"/></svg></td><td class="bg-[#3596fb]"><i>DRILLI...</i></td><td class="bg-[#3596fb]"><i>MCS_MILL</i></td><td class="bg-[#3596fb]"><i>METHOD</i></td></tr>
          </tbody>
        </table>
        <div class="flex h-3 shrink-0 items-center gap-1 bg-[#e4e4e4] px-1">
          <svg class="size-[5px]" viewBox="0 0 5 5"><path d="M4 0v5L1 2.500z" fill="#333"/></svg>
          <div class="flex h-[10px] w-[239px] items-center justify-center gap-px border border-[#999] bg-linear-to-b from-[#e6e6e6] to-[#c4c4c4]"><i class="h-1 w-px bg-[#444]"></i><i class="h-1 w-px bg-[#444]"></i><i class="h-1 w-px bg-[#444]"></i></div>
          <svg class="ml-auto size-[5px]" viewBox="0 0 5 5"><path d="M1 0v5l3-2.500z" fill="#333"/></svg>
        </div>
      </div>
      <div class="mx-auto my-[3px] h-[3px] w-[54px] shrink-0 border border-[#aaa] bg-[#f5f5f5]"></div>
      <button class="flex h-[15px] shrink-0 items-center justify-between border border-[#aaa] bg-linear-to-b from-white to-[#d9d9d9] pl-1 font-bold">相依性<span class="flex h-full w-4 items-center justify-center border-l border-[#ccc]"><svg class="size-2" viewBox="0 0 8 8"><path d="M1 1l3 5 3-5" fill="none" stroke="#444" stroke-width="1.600"/></svg></span></button>
      <button aria-label="细节" class="flex h-[15px] shrink-0 items-center justify-end border border-[#aaa] bg-linear-to-b from-white to-[#d9d9d9]"><span class="flex h-full w-4 items-center justify-center border-l border-[#ccc]"><svg class="size-2" viewBox="0 0 8 8"><path d="M1 1l3 5 3-5" fill="none" stroke="#444" stroke-width="1.600"/></svg></span></button>
    </section>

    <!-- Graphics window -->
    <main class="relative min-w-0 flex-1 border border-[#e6b48c] bg-[linear-gradient(#adadad_2%,#bebebe_2%_23%,#cbcbcb_23%_41%,#d6d6d6_41%_53%,#dedede_53%_62%,#e3e3e3_62%_71%,#e9e9e9_71%)]">
      <svg class="size-full" viewBox="330 159 660 482" preserveAspectRatio="xMinYMin meet" role="img" aria-label="零件模型" font-family="Liberation Sans, sans-serif" font-size="9">
        <g stroke="#3b3b3b" stroke-linejoin="round">
          <path d="M416 339l182-49 92 36-181 49z" fill="#bdbdbd"/>
          <path d="M416 339l93 36 14 98-93-35z" fill="#747474"/>
          <path d="M509 375l181-49 15 98-182 49z" fill="#979797"/>
        </g>
        <g fill="#777" stroke="#333" stroke-width=".8">
          <ellipse cx="480" cy="336" rx="6" ry="2.500"/><ellipse cx="568" cy="310.500" rx="6" ry="2.500"/><ellipse cx="573" cy="332.500" rx="6" ry="2.500"/><ellipse cx="538" cy="356.500" rx="6" ry="2.500"/>
        </g>
        <g fill="#333"><ellipse cx="444.500" cy="385" rx="3" ry="6"/><ellipse cx="469.500" cy="387" rx="3.500" ry="6"/><ellipse cx="459.500" cy="421.500" rx="3.500" ry="6"/><ellipse cx="492.500" cy="429" rx="3.500" ry="6"/></g>
        <g fill="#f4f4f4"><ellipse cx="446" cy="387" rx="2.200" ry="4.500"/><ellipse cx="471" cy="388" rx="2.500" ry="4.500"/><ellipse cx="461" cy="423" rx="2.500" ry="4.500"/><ellipse cx="494" cy="430" rx="2.500" ry="4.500"/></g>
        <path d="M480 326v9M571 322l2 10M536 346l2 10M436 387h10M462 388h9M452 423h9M484 431l8-2M534 357h8M569 333h7" stroke="#32d6dc" stroke-width="1.600" stroke-dasharray="4 1.500" fill="none"/>
        <path d="M567 301v8" stroke="#555"/>
        <path d="M565 301l-85 25 56 20-5-38-48 51M572 325l-5-41 154 46-29 8M473 371l-58 63 37-10 33 8-24-43-24-1" fill="none" stroke="#d11f1f" stroke-width="1.400" stroke-dasharray="2 1.800"/>
        <path d="M553 333l-60 16" stroke="#d23030" stroke-width="1.300"/><path d="M493 349l12-6 1 4zM522 341l14-6 1 4z" fill="#d23030"/>
        <path d="M553 333l30 12" stroke="#1d9a34" stroke-width="1.300"/><path d="M584 345l-11-2 2-4zM570 341l-12-3 2-4z" fill="#1d9a34"/>
        <path d="M553 333l-9-64" stroke="#1238c8" stroke-width="1.800"/><path d="M543 267l5 13h-6zM548 302l4 14-1 8-4-12z" fill="#1238c8"/>
        <g fill="#1f49d6"><text x="546" y="266">ZM</text><text x="551" y="297">ZC</text></g>
        <g fill="#c84444"><text x="520" y="351">XC</text><text x="492" y="359">XM</text></g>
        <g fill="#2aa344"><text x="558" y="347">YC</text><text x="570" y="352">YM</text></g>
        <g stroke="#999" fill="#d4d4d4" fill-opacity=".7" stroke-width=".8"><path d="M353 591l13-4 9 3 1 15-13 3-9-4z"/><path d="M353 591l8 2 14-3M361 593l2 15M366 587l1 14 9 4M354 604l13-3" fill="none"/></g>
        <path d="M369 598l-2-15" stroke="#3a58c8"/><path d="M366 576l3 10h-5z" fill="#1238a8"/>
        <path d="M346 608l7-4 2 3z" fill="#a02727"/><path d="M374 602l8 4-5 1z" fill="#1c7a2c"/><path d="M355 605l12-3" stroke="#d88"/>
        <text x="362" y="576" font-size="8" fill="#1f49d6">Z</text><text x="339" y="612" font-size="8" fill="#c84444">X</text><text x="380" y="610" font-size="8" fill="#2aa344">Y</text>
      </svg>
      <p class="absolute bottom-px left-1 font-['Liberation_Sans',sans-serif] text-[9px] text-[#f3bd88]">TFR-TRI WORK Camera TFR-TRI</p>
    </main>
  </div>

  <!-- Lower toolbar -->
  <footer class="flex h-[28px] shrink-0 overflow-hidden border-t border-[#f5f5f5] bg-linear-to-b from-[#e2e2e2] to-[#d7d7d7] pl-[3px] text-[#a0a0a0] whitespace-nowrap [&_button]:flex [&_button]:h-10 [&_button]:shrink-0 [&_button]:flex-col [&_button]:items-center [&_button]:gap-1 [&_button]:pt-[3px] [&_button>svg]:shrink-0 [&_svg]:text-[#8c8c8c] [&>div]:flex [&>div]:border-r [&>div]:border-[#bdbdbd]">
    <div class="w-[223px]">
      <i class="my-1 w-[2px] border-l-2 border-dotted border-[#999]"></i>
      <button class="w-[53px]"><svg class="size-[15px]"><use href="#v1"/></svg>程序顺序视图</button>
      <button class="w-[53px]"><svg class="size-[15px]"><use href="#ctool"/></svg>机床视图</button>
      <button class="w-[53px]"><svg class="size-[15px]"><use href="#cgeo"/></svg>几何视图</button>
      <button class="w-[53px]"><svg class="size-[15px]"><use href="#cmeth"/></svg>加工方法视图</button>
    </div>
    <div class="w-[363px]">
      <i class="my-1 ml-[2px] w-[3px] border-l-2 border-dotted border-[#999]"></i>
      <button class="w-[53px] font-bold text-[#222]"><svg class="size-[15px]"><use href="#draft"/></svg>拔模分析</button>
      <svg class="mt-5 h-1 w-2"><use href="#ar"/></svg>
      <button class="w-[53px]"><svg class="size-[15px]" viewBox="0 0 16 16"><path d="M8 2v12M2 8h12" stroke="#999" stroke-width="1.200"/></svg><span>点<i>(P)</i></span></button>
      <svg class="mt-5 h-1 w-2"><use href="#ar"/></svg>
      <button class="w-[53px]"><svg class="size-[15px]"><use href="#curve"/></svg><span>复合曲线<i>(O)</i></span></button>
      <svg class="mt-5 h-1 w-2"><use href="#ar"/></svg>
      <button class="w-[53px]"><svg class="size-[15px]"><use href="#patch"/></svg><span>修补开口<i>(P)</i></span></button>
      <button class="w-[53px] font-bold text-[#222]"><svg class="size-[15px]"><use href="#sync"/></svg>同步建模工具</button>
      <button class="w-[52px]"><svg class="size-[15px]"><use href="#cgeo"/></svg><span>小平面化<i>(C)</i></span></button>
      <svg class="mt-5 h-1 w-2"><use href="#ar"/></svg>
    </div>
  </footer>
</div>

<!-- Drilling dialog -->
<form class="absolute top-[136px] right-0 bottom-0 flex w-[204px] flex-col border-b-[3px] border-l-2 border-[#333] bg-[#e6e6e6] [&_h3]:flex [&_h3]:h-[15px] [&_h3]:shrink-0 [&_h3]:items-center [&_h3]:justify-between [&_h3]:border-b [&_h3]:border-[#aaa] [&_h3]:bg-linear-to-b [&_h3]:from-[#fafafa] [&_h3]:to-[#d8d8d8] [&_h3]:pl-1 [&_h3]:font-bold [&_h3>svg]:h-full [&_h3>svg]:w-4 [&_section]:shrink-0 [&_section]:border-x [&_section]:border-[#bbb] [&_section]:bg-[#d5d5d5] [&_section]:px-1 [&_section_button]:flex [&_section_button]:size-5 [&_section_button]:shrink-0 [&_section_button]:items-center [&_section_button]:justify-center [&_section_button]:rounded-[2px] [&_section_button]:border [&_section_button]:border-[#888] [&_section_button]:bg-[#dedede]">
  <svg class="hidden" aria-hidden="true">
    <symbol id="up" viewBox="0 0 16 15"><path d="M.5 0v15" stroke="#ccc"/><path d="M5 10l3.500-5L12 10" fill="none" stroke="#555" stroke-width="1.500"/></symbol>
    <symbol id="dn" viewBox="0 0 16 15"><path d="M.5 0v15" stroke="#ccc"/><path d="M5 5l3.500 5L12 5" fill="none" stroke="#555" stroke-width="1.500"/></symbol>
    <symbol id="sel" viewBox="0 0 12 12"><path d="M0 0h12v12H0z" fill="#8fc1ee"/><path d="M0 0h12v5H0z" fill="#b9dbf8"/><path d="M2 4h8L6 9z" fill="#111"/></symbol>
  </svg>
  <header class="-ml-[2px] flex h-[15px] shrink-0 items-center rounded-tl-sm bg-linear-to-b from-[#777] via-[#2c2c2c] via-35% to-[#181818] pl-[6px] text-white">
    <h2 class="flex-1">钻</h2>
    <button type="button" aria-label="设置" class="mr-[2px] flex size-[13px] items-center justify-center border border-[#666] bg-[#3a3a3a]"><svg class="size-[9px]" viewBox="0 0 10 10"><circle cx="5" cy="5" r="3" fill="none" stroke="#fff" stroke-width="1.500"/><path d="M5 0v2M5 8v2M0 5h2M8 5h2M1.500 1.500l1.400 1.400M7 7l1.500 1.500M8.500 1.500L7 3M3 7L1.500 8.500" stroke="#fff"/></svg></button>
    <button type="button" aria-label="关闭" class="flex h-[13px] w-3 items-center justify-center bg-[#d5483c]"><svg class="size-[9px]" viewBox="0 0 10 10"><path d="M1 1l8 8M9 1L1 9" stroke="#fff" stroke-width="1.800"/></svg></button>
  </header>
  <div class="flex flex-1 flex-col pt-[3px] pr-[2px] pl-[3px]">
    <h3>几何体<svg><use href="#up"/></svg></h3>
    <section class="flex h-[99px] flex-col gap-[3px] pt-[5px]">
      <div class="flex gap-[3px]">
        <label for="geo" class="flex-1 pt-[3px]">几何体</label>
        <div class="relative mr-px h-[14px] w-[70px] rounded-[2px] border border-[#777] bg-white"><select id="geo" class="block size-full appearance-none pl-[2px] italic"><option>MCS_MILL</option></select><svg class="pointer-events-none absolute top-0 right-0 size-3"><use href="#sel"/></svg></div>
        <button type="button" aria-label="新建几何体"><svg class="size-4"><use href="#geon"/></svg></button>
        <button type="button" aria-label="编辑几何体" class="text-[#f0c93c]"><svg class="size-4"><use href="#wr"/></svg></button>
      </div>
      <div class="flex items-center gap-[3px]"><span class="flex-1">指定孔</span><button type="button" aria-label="选择孔"><svg class="size-4"><use href="#hole"/></svg></button><button type="button" aria-label="显示孔" class="text-[#1f3f9e]"><svg class="size-4"><use href="#torch"/></svg></button></div>
      <div class="flex items-center gap-[3px]"><span class="flex-1">指定顶面</span><button type="button" aria-label="选择顶面"><svg class="size-4"><use href="#topf"/></svg></button><button type="button" aria-label="显示顶面" class="text-[#9c9c9c]"><svg class="size-4"><use href="#torch"/></svg></button></div>
      <div class="flex items-center gap-[3px]"><span class="flex-1">指定底面</span><button type="button" aria-label="选择底面"><svg class="size-4"><use href="#botf"/></svg></button><button type="button" aria-label="显示底面" class="text-[#9c9c9c]"><svg class="size-4"><use href="#torch"/></svg></button></div>
    </section>
    <h3>刀具<svg><use href="#dn"/></svg></h3>
    <h3>刀轴<svg><use href="#up"/></svg></h3>
    <section class="flex h-[46px] flex-col gap-1 pt-[5px]">
      <div class="flex gap-[3px]">
        <label for="axis" class="flex-1 pt-[3px]">轴</label>
        <div class="relative h-[14px] w-[85px] rounded-[2px] border border-[#777] bg-white"><select id="axis" class="block size-full appearance-none pl-[2px]"><option>垂直于部件表面</option></select><svg class="pointer-events-none absolute top-0 right-0 size-3"><use href="#sel"/></svg></div>
        <button type="button" aria-label="编辑轴" class="text-[#a6a6a6]"><svg class="size-4"><use href="#wr"/></svg></button>
      </div>
      <label class="flex items-center gap-px"><span class="relative size-[10px]"><input type="checkbox" checked class="peer block size-[10px] appearance-none border border-[#345a86] bg-[#b7dcf8]"><svg class="pointer-events-none absolute inset-0 size-[10px]" viewBox="0 0 10 10"><path d="M2 5l2.500 3L9 2" fill="none" stroke="#143d7c" stroke-width="1.800"/></svg></span>用圆弧的轴</label>
    </section>
    <h3>循环类型<svg><use href="#up"/></svg></h3>
    <section class="flex h-[47px] flex-col gap-[3px] pt-1">
      <div class="flex gap-[3px]">
        <label for="cycle" class="flex-1 pt-[3px]">循环</label>
        <div class="relative h-[14px] w-[85px] rounded-[2px] border border-[#777] bg-white"><select id="cycle" class="block size-full appearance-none pl-[2px]"><option>标准钻...</option></select><svg class="pointer-events-none absolute top-0 right-0 size-3"><use href="#sel"/></svg></div>
        <button type="button" aria-label="编辑循环" class="text-[#f0d03c]"><svg class="size-4"><use href="#wr"/></svg></button>
      </div>
      <div class="flex items-center"><label for="clr" class="flex-1">最小安全距离</label><input id="clr" value="10.0000" class="h-[13px] w-12 rounded-[2px] border border-[#777] bg-[#3a96f5] pr-px text-right font-['Liberation_Mono',monospace] text-[9px] text-white"></div>
    </section>
    <h3>深度偏置<svg><use href="#up"/></svg></h3>
    <section class="flex h-[38px] flex-col gap-[2px] pt-1">
      <div class="flex items-center"><label for="thru" class="flex-1">通孔安全距离</label><input id="thru" value="1.5000" class="h-[13px] w-12 rounded-[2px] border border-[#777] bg-white pr-px text-right font-['Liberation_Mono',monospace] text-[9px]"></div>
      <div class="flex items-center"><label for="blind" class="flex-1">盲孔余量</label><input id="blind" value="0.0000" class="h-[13px] w-12 rounded-[2px] border border-[#777] bg-white pr-px text-right font-['Liberation_Mono',monospace] text-[9px]"></div>
    </section>
    <h3>刀轨设置<svg><use href="#up"/></svg></h3>
    <section class="flex h-[77px] flex-col gap-[3px] pt-[5px]">
      <div class="flex gap-[3px]">
        <label for="method" class="flex-1 pt-[3px]">方法</label>
        <div class="relative mr-px h-[14px] w-[70px] rounded-[2px] border border-[#777] bg-white"><select id="method" class="block size-full appearance-none pl-[2px] italic"><option>METHOD</option></select><svg class="pointer-events-none absolute top-0 right-0 size-3"><use href="#sel"/></svg></div>
        <button type="button" aria-label="新建方法"><svg class="size-4"><use href="#metn"/></svg></button>
        <button type="button" aria-label="编辑方法" class="text-[#a6a6a6]"><svg class="size-4"><use href="#wr"/></svg></button>
      </div>
      <div class="flex items-center"><span class="flex-1">避让</span><button type="button" aria-label="避让"><svg class="size-4"><use href="#avoid"/></svg></button></div>
      <div class="flex items-center"><span class="flex-1">进给率和速度</span><button type="button" aria-label="进给率和速度"><svg class="size-4"><use href="#feed"/></svg></button></div>
    </section>
    <h3>机床控制<svg><use href="#dn"/></svg></h3>
    <h3>程序<svg><use href="#dn"/></svg></h3>
    <h3>选项<svg><use href="#dn"/></svg></h3>
    <h3>操作<svg><use href="#up"/></svg></h3>
    <section class="flex h-8 justify-center gap-[3px] border-b pt-[5px]">
      <button type="button" aria-label="生成"><svg class="size-4"><use href="#gen"/></svg></button>
      <button type="button" aria-label="重播"><svg class="size-4"><use href="#replay"/></svg></button>
      <button type="button" aria-label="确认"><svg class="size-4"><use href="#verify"/></svg></button>
      <button type="button" aria-label="列表"><svg class="size-4"><use href="#list"/></svg></button>
    </section>
    <div class="mt-[2px] flex justify-end gap-[5px] border-t border-[#bbb] pt-[3px] pr-[7px]">
      <button type="submit" class="h-[14px] w-[42px] border border-[#4b8b4b] bg-linear-to-b from-[#c8f2c0] to-[#5fce5a]">确定</button>
      <button type="button" class="h-[14px] w-[42px] border border-[#888] bg-linear-to-b from-[#f4f4f4] to-[#d4d4d4]">取消</button>
    </div>
  </div>
</form>

<!-- Site stamp -->
<svg class="pointer-events-none absolute bottom-2 left-3 h-[120px] w-[116px]" viewBox="12 542 116 120" role="img" aria-label="UG爱好者">
  <defs><filter id="rough" color-interpolation-filters="sRGB"><feTurbulence type="fractalNoise" baseFrequency=".14" numOctaves="3" seed="4"/><feDisplacementMap in="SourceGraphic" scale="6" xChannelSelector="R" yChannelSelector="G"/></filter></defs>
  <g fill="#f00" filter="url(#rough)">
    <path d="M124 584C117 560 97 543 72 543 39 543 13 569 13 603s27 58 58 58c26 0 47-16 54-42l-5 2c-7 20-25 33-44 33-29 0-50-22-51-51-1-30 21-54 48-54 21 0 39 13 47 36z"/>
    <path d="M120 586l5 12-3 1-3-9zM122 607l5 4-2 8-5 3zM68 650l8-3 10 3 14-4-6 6-20 3z"/>
  </g>
  <g fill="#f00">
    <circle cx="69.500" cy="564.500" r="5"/>
    <path d="M50 571l8-4c3 3 6 5 10 6 8 0 14-4 20-8l8 5c-5 4-11 7-17 8 4 7 6 15 6 25h-8c-1-8-3-14-8-19-3 3-5 6-6 10l-9-2c2-5 4-9 8-14-4-2-8-4-12-7z"/>
  </g>
  <path d="M27 623.500h91v11.500H27z" fill="#f00"/>
  <g font-weight="bold" text-anchor="middle">
    <text x="52" y="621" font-family="DejaVu Sans, sans-serif" font-size="19" fill="#f00" stroke="#f3f3f3" stroke-width="1.500" paint-order="stroke">UG</text>
    <text x="93" y="619" font-family="Noto Sans CJK SC, sans-serif" font-size="15" font-weight="900" fill="#f00" stroke="#f3f3f3" stroke-width="1.500" paint-order="stroke">爱好者</text>
    <text x="72.500" y="633" font-family="Liberation Sans, sans-serif" font-size="10" fill="#fff">WWW.UGSNX.COM</text>
  </g>
</svg>

<script>
  const body = document.getElementById('rows');
  for (let i = 0; i < 25; i++) {
    const row = body.insertRow();
    for (let c = 0; c < 5; c++) row.insertCell();
  }
</script>
</body>
</html>
